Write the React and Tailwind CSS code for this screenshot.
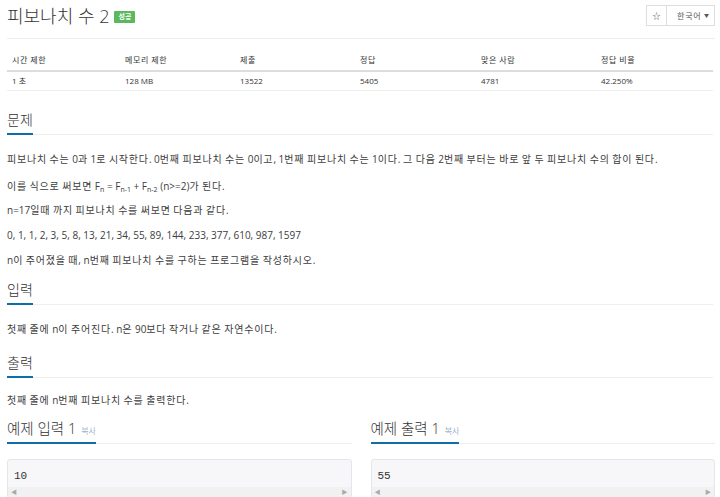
import React from 'react';

const font = "font-['Open_Sans','Noto_Sans_CJK_KR',sans-serif]";

const stats = [
  ['시간 제한', '1 초'],
  ['메모리 제한', '128 MB'],
  ['제출', '13522'],
  ['정답', '5405'],
  ['맞은 사람', '4781'],
  ['정답 비율', '42.250%'],
];

const fib = '0, 1, 1, 2, 3, 5, 8, 13, 21, 34, 55, 89, 144, 233, 377, 610, 987, 1597';

// hangul runs are set a touch wider than the latin around them
const K = ({ t, wide = 'tracking-[0.8px]' }) =>
  t.split(/([가-힣]+)/).map((s, i) =>
    /[가-힣]/.test(s) ? (
      <span key={i} className={wide}>
        {s}
      </span>
    ) : (
      s
    )
  );

const Heading = ({ children, className = '' }) => (
  <div className={`flex border-b border-[#eeeeee] ${className}`}>
    <h2 className="text-[14px] leading-[20px] font-light text-[#333] pb-[3px] border-b-2 border-[#0d6fa6] -mb-px whitespace-nowrap">
      {children}
    </h2>
  </div>
);

const P = ({ children, className = '' }) => (
  <p className={`text-[10px] leading-[16px] text-[#3d3d3d] ${className}`}>{children}</p>
);

const Sample = ({ title, value }) => (
  <div>
    <Heading>
      <span className="text-[14.5px]">{title}</span>
      <span className="text-[8px] leading-none text-[#6a8cab] ml-[5px]">복사</span>
    </Heading>
    <div className="mt-[15px] bg-[#f7f7f9] border border-[#e5e5ea] rounded-[3px]">
      <pre className="px-[6px] pt-[8px] pb-[3px] text-[11px] leading-[16px] text-[#333] font-['Liberation_Mono',monospace]">
        {value}
      </pre>
      <div className="flex justify-between items-center h-[10px] px-[3px] bg-[#f1f1f1] text-[6px] leading-none text-[#aaa]">
        <span>◀</span>
        <span>▶</span>
      </div>
    </div>
  </div>
);

export default function App() {
  return (
    <div className={`${font} bg-white w-[720px] h-[497px] overflow-hidden pl-[7px] pr-[5px] text-[#333]`}>
      <div className="flex items-start justify-between border-b border-[#eeeeee] pt-[4px] pb-[10px]">
        <div className="flex items-center">
          <h1 className="text-[18px] leading-[24px] font-light text-[#333]">피보나치 수 2</h1>
          <span className="ml-[5px] mt-[2px] bg-[#5cb85c] text-white text-[7px] leading-[12px] px-[4px] rounded-[1px] font-bold">
            성공
          </span>
        </div>
        <div className="flex mt-[1px] text-[8px] text-[#555]">
          <div className="w-[21px] h-[21px] border border-[#ddd] flex items-center justify-center">☆</div>
          <div className="w-[48px] h-[21px] border border-l-0 border-[#ddd] flex items-center justify-between pl-[10px] pr-[5px]">
            <span>
              <K t="한국어" />
            </span>
            <span className="text-[5px]">▼</span>
          </div>
        </div>
      </div>

      <div className="mt-[11px] mr-[2px] text-[8px] text-[#333]">
        <div className="grid grid-cols-[113px_115px_120px_121px_120px_1fr] border-b-2 border-[#dddddd] h-[22px] items-center">
          {stats.map(([h]) => (
            <div key={h} className="pl-[5px]">
              <K t={h} wide="tracking-[0.7px]" />
            </div>
          ))}
        </div>
        <div className="grid grid-cols-[113px_115px_120px_121px_120px_1fr] border-b border-[#eeeeee] h-[19px] items-center">
          {stats.map(([h, v]) => (
            <div key={h} className="pl-[5px]">
              <K t={v} wide="tracking-[0.7px]" />
            </div>
          ))}
        </div>
      </div>

      <Heading className="mt-[19px] mr-[2px]">문제</Heading>
      <div className="mt-[16px]">
        <P className="mb-[11px]">
          <K t="피보나치 수는 0과 1로 시작한다. 0번째 피보나치 수는 0이고, 1번째 피보나치 수는 1이다. 그 다음 2번째 부터는 바로 앞 두 피보나치 수의 합이 된다." />
        </P>
        <P className="mb-[8px]">
          <K t="이를 식으로 써보면 " />F<sub className="text-[7px]">n</sub> = F<sub className="text-[7px]">n-1</sub> + F
          <sub className="text-[7px]">n-2</sub> (n&gt;=2)<K t="가 된다." />
        </P>
        <P className="mb-[9px]">
          <K t="n=17일때 까지 피보나치 수를 써보면 다음과 같다." />
        </P>
        <P className="mb-[9px]">{fib}</P>
        <P>
          <K t="n이 주어졌을 때, n번째 피보나치 수를 구하는 프로그램을 작성하시오." />
        </P>
      </div>

      <Heading className="mt-[12px] mr-[2px]">입력</Heading>
      <P className="mt-[16px]">
        <K t="첫째 줄에 n이 주어진다. n은 90보다 작거나 같은 자연수이다." />
      </P>

      <Heading className="mt-[16px] mr-[2px]">출력</Heading>
      <P className="mt-[14px]">
        <K t="첫째 줄에 n번째 피보나치 수를 출력한다." />
      </P>

      <div className="mt-[11px] grid grid-cols-2 gap-[19px]">
        <Sample title="예제 입력 1" value="10" />
        <Sample title="예제 출력 1" value="55" />
      </div>
    </div>
  );
}
